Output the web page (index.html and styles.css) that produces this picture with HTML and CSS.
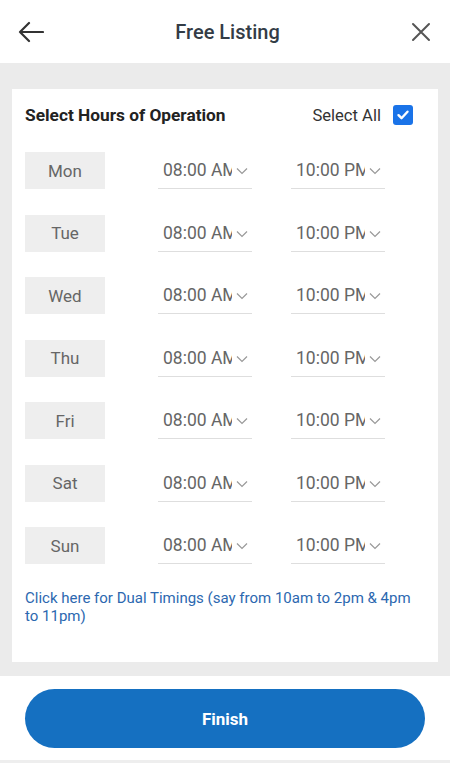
FILE: index.html
```html
<!DOCTYPE html>
<html lang="en">
<head>
  <meta charset="UTF-8">
  <meta name="viewport" content="width=device-width, initial-scale=1.0">
  <title>Free Listing</title>
  <link rel="stylesheet" href="styles.css">
</head>
<body>
  <header class="topbar">
    <button class="icon-btn" aria-label="Back">
      <svg width="26" height="22" viewBox="0 0 26 22"><path d="M25 11H2M11 2L2 11l9 9" fill="none" stroke="#333" stroke-width="2.2" stroke-linecap="round" stroke-linejoin="round"/></svg>
    </button>
    <h1 class="title">Free Listing</h1>
    <button class="icon-btn" aria-label="Close">
      <svg width="20" height="20" viewBox="0 0 20 20"><path d="M2 2l16 16M18 2L2 18" fill="none" stroke="#555" stroke-width="2" stroke-linecap="round"/></svg>
    </button>
  </header>

  <main class="content">
    <section class="card">
      <div class="card-head">
        <h2>Select Hours of Operation</h2>
        <label class="select-all">Select All
          <span class="checkbox">
            <svg width="14" height="14" viewBox="0 0 14 14"><path d="M2.5 7.2l3 3 6-6.5" fill="none" stroke="#fff" stroke-width="2.4" stroke-linecap="round" stroke-linejoin="round"/></svg>
          </span>
        </label>
      </div>

      <div class="rows" id="rows"></div>

      <a class="dual-link" href="#">Click here for Dual Timings (say from 10am to 2pm &amp; 4pm to 11pm)</a>
    </section>
  </main>

  <footer class="bottom">
    <button class="finish">Finish</button>
  </footer>

  <script>
    var days = ['Mon', 'Tue', 'Wed', 'Thu', 'Fri', 'Sat', 'Sun'];
    var chevron = '<svg width="12" height="8" viewBox="0 0 12 8"><path d="M1 1.5l5 5 5-5" fill="none" stroke="#999" stroke-width="1.2"/></svg>';
    var html = '';
    days.forEach(function (d) {
      html += '<div class="row">' +
        '<div class="day">' + d + '</div>' +
        '<div class="time"><span class="val">08:00 AM</span>' + chevron + '</div>' +
        '<div class="time"><span class="val">10:00 PM</span>' + chevron + '</div>' +
        '</div>';
    });
    document.getElementById('rows').innerHTML = html;
  </script>
</body>
</html>
```

FILE: styles.css
```css
* {
  box-sizing: border-box;
}

body {
  margin: 0;
  font-family: Roboto, "Noto Sans", Arial, sans-serif;
  background: #fff;
  color: #333;
  width: 450px;
}

/* Header */
.topbar {
  height: 63px;
  display: flex;
  align-items: center;
  justify-content: space-between;
  padding: 0 19px 0 18px;
}

.icon-btn {
  background: none;
  border: none;
  padding: 0;
  display: flex;
}

.title {
  margin: 0;
  font-size: 20px;
  font-weight: 500;
  color: #333c46;
}

/* Gray area */
.content {
  background: #ebebeb;
  padding: 26px 12px 14px 12px;
}

.card {
  background: #fff;
  padding: 13px 13px 37px 13px;
}

.card-head {
  height: 26px;
  display: flex;
  align-items: center;
  justify-content: space-between;
}

.card-head h2 {
  margin: 0;
  font-size: 17.3px;
  font-weight: 700;
  color: #222;
}

.select-all {
  display: flex;
  align-items: center;
  gap: 12px;
  font-size: 16.6px;
  color: #333;
  margin-right: 12px;
}

.checkbox {
  width: 20px;
  height: 20px;
  border-radius: 3px;
  background: #1a73e8;
  display: flex;
  align-items: center;
  justify-content: center;
}

.rows {
  margin-top: 24px;
  display: flex;
  flex-direction: column;
  gap: 25.5px;
}

.row {
  display: flex;
  height: 37px;
}

.day {
  width: 80px;
  background: #eeeeee;
  color: #666;
  font-size: 17px;
  display: flex;
  align-items: center;
  justify-content: center;
}

.time {
  width: 94px;
  margin-left: 53px;
  border-bottom: 1px solid #dedede;
  display: flex;
  align-items: center;
  padding-left: 5px;
  color: #666;
  font-size: 17.5px;
}

.time + .time {
  margin-left: 39px;
}

.time .val {
  width: 69px;
  overflow: hidden;
  white-space: nowrap;
}

.time svg {
  margin-left: 4px;
  margin-top: 2px;
}

.dual-link {
  display: block;
  margin-top: 26px;
  font-size: 15px;
  line-height: 17.5px;
  color: #2c68b0;
  text-decoration: none;
}

/* Footer */
.bottom {
  padding: 13px 25px 12px 25px;
  border-bottom: 3px solid #eeeeee;
}

.finish {
  width: 100%;
  height: 59px;
  border: none;
  border-radius: 30px;
  background: #1570c1;
  color: #fff;
  font-family: Roboto, Arial, sans-serif;
  font-size: 17px;
  font-weight: 700;
}
```
